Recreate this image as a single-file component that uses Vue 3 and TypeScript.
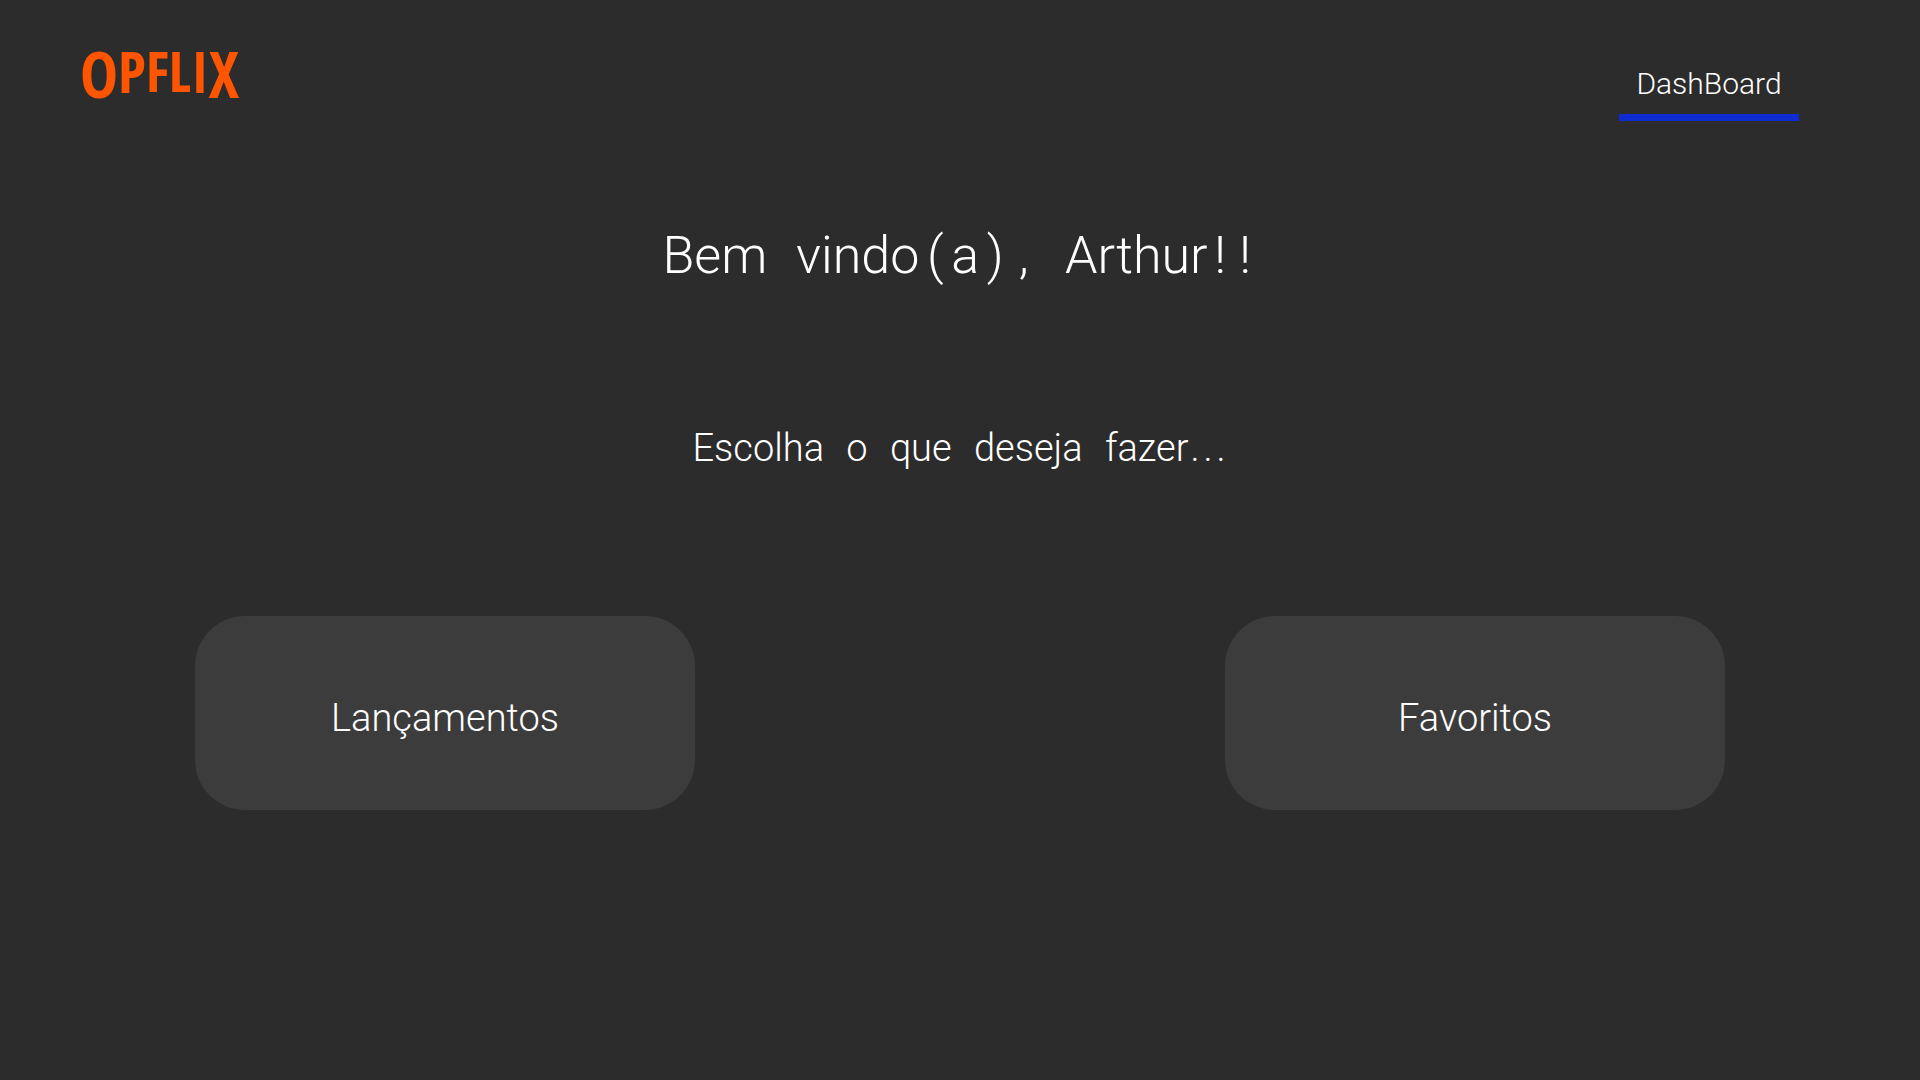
<script setup lang="ts">
interface LogoLetter {
  letter: string
  size: 'tall' | 'medium' | 'small'
}

const logo: LogoLetter[] = [
  { letter: 'O', size: 'tall' },
  { letter: 'P', size: 'medium' },
  { letter: 'F', size: 'small' },
  { letter: 'L', size: 'small' },
  { letter: 'I', size: 'medium' },
  { letter: 'X', size: 'tall' },
]

const userName = 'Arthur'

// Punctuation sits in fixed-width cells, so it is split from the letters.
const splitWords = (text: string): string[][] =>
  text.split(' ').map((word) => word.split(/([(),!.])/).filter((part) => part !== ''))

const greeting = splitWords(`Bem vindo(a), ${userName}!!`)
const lead = splitWords('Escolha o que deseja fazer...')

const options = ['Lançamentos', 'Favoritos']

const cellClass = (part: string): string => {
  if (/^[()]$/.test(part)) return 'cell bracket'
  if (/^[,!]$/.test(part)) return 'cell mark'
  return part === '.' ? 'cell dot' : ''
}
</script>

<template>
  <div class="page">
    <header class="header">
      <a class="logo" href="#" aria-label="OPFLIX"><span v-for="item in logo" :key="item.letter" :class="item.size">{{ item.letter }}</span></a>
      <nav>
        <a class="nav-link" href="#">DashBoard</a>
      </nav>
    </header>
    <main>
      <h1 class="greeting">
        <template v-for="(word, i) in greeting" :key="i">{{ ' ' }}<span class="word"><span v-for="(part, j) in word" :key="j" :class="cellClass(part)">{{ part }}</span></span></template>
      </h1>
      <p class="lead">
        <template v-for="(word, i) in lead" :key="i">{{ ' ' }}<span class="word"><span v-for="(part, j) in word" :key="j" :class="cellClass(part)">{{ part }}</span></span></template>
      </p>
      <div class="cards">
        <button v-for="option in options" :key="option" type="button" class="card">{{ option }}</button>
      </div>
    </main>
  </div>
</template>

<style>
body {
  background: #2c2c2c;
}
</style>

<style scoped>
.page {
  min-height: 100vh;
  color: #fff;
  font-family: Roboto, "Liberation Sans", sans-serif;
  font-weight: 300;
}

.header {
  display: flex;
  justify-content: space-between;
  align-items: flex-start;
  padding: 42px 121px 0 80px;
}

.logo {
  display: flex;
  align-items: flex-start;
  color: #ff5500;
  font-family: "Open Sans Condensed", "Open Sans", sans-serif;
  font-weight: 700;
  line-height: 1;
  text-decoration: none;
}

.tall {
  font-size: 64px;
}

.medium {
  font-size: 58px;
}

.small {
  font-size: 56px;
}

.nav-link {
  display: block;
  width: 180px;
  padding: 24px 0 12px;
  border-bottom: 7px solid #0f2cd3;
  color: #fff;
  font-size: 30px;
  line-height: 36px;
  text-align: center;
  text-decoration: none;
}

.greeting {
  margin: 105px 0 0;
  font-size: 52px;
  font-weight: 300;
  line-height: 60px;
  text-align: center;
}

.greeting .word + .word {
  margin-left: 16px;
}

.lead .word + .word {
  margin-left: 13px;
}

.cell {
  display: inline-block;
  text-align: center;
}

.bracket {
  width: 32px;
}

.mark {
  width: 25px;
}

.dot {
  width: 13px;
}

.lead {
  margin: 140px 0 0;
  font-size: 38px;
  line-height: 44px;
  text-align: center;
}

.cards {
  display: flex;
  justify-content: space-between;
  margin-top: 146px;
  padding: 0 195px;
}

.card {
  width: 500px;
  height: 194px;
  padding: 10px 0 0;
  border: 0;
  border-radius: 50px;
  background: #3c3c3c;
  color: #fff;
  font: inherit;
  font-size: 38px;
  cursor: pointer;
}
</style>
